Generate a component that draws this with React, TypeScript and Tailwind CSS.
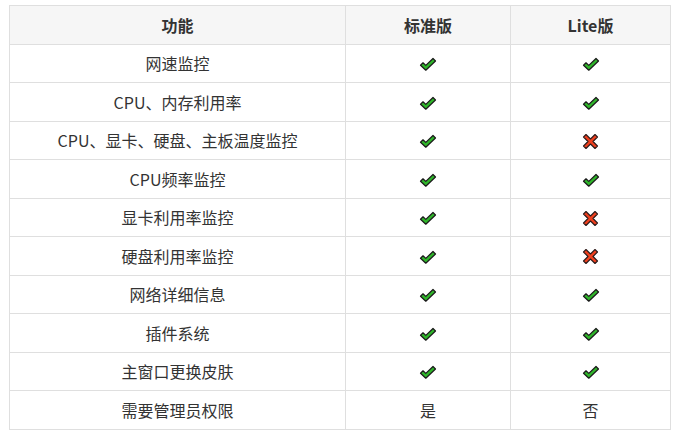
import React from 'react';

type Val = 'yes' | 'no' | string;

const rows: [string, Val, Val][] = [
  ['网速监控', 'yes', 'yes'],
  ['CPU、内存利用率', 'yes', 'yes'],
  ['CPU、显卡、硬盘、主板温度监控', 'yes', 'no'],
  ['CPU频率监控', 'yes', 'yes'],
  ['显卡利用率监控', 'yes', 'no'],
  ['硬盘利用率监控', 'yes', 'no'],
  ['网络详细信息', 'yes', 'yes'],
  ['插件系统', 'yes', 'yes'],
  ['主窗口更换皮肤', 'yes', 'yes'],
  ['需要管理员权限', '是', '否'],
];

const Check = () => (
  <svg width="18" height="15" viewBox="0 0 18 15" className="inline-block">
    <path
      d="M1.5 8.2 L4 5.8 L6.8 8.4 L14 1.5 L16.5 4 L6.8 13.2 Z"
      fill="#2fb52a"
      stroke="#1a1a1a"
      strokeWidth="1.2"
      strokeLinejoin="round"
    />
  </svg>
);

const Cross = () => (
  <svg width="17" height="17" viewBox="0 0 17 17" className="inline-block">
    <path
      d="M1.5 4 L4 1.5 L8.5 6 L13 1.5 L15.5 4 L11 8.5 L15.5 13 L13 15.5 L8.5 11 L4 15.5 L1.5 13 L6 8.5 Z"
      fill="#f0401e"
      stroke="#2a1a1a"
      strokeWidth="1.1"
      strokeLinejoin="round"
    />
  </svg>
);

const Cell = ({ v }: { v: Val }) => {
  if (v === 'yes') return <Check />;
  if (v === 'no') return <Cross />;
  return <>{v}</>;
};

const App = () => {
  return (
    <div className="w-[675px] h-[434px] bg-white pt-[5px] pl-[9px]">
      <table
        className="w-[661px] border-collapse text-[16px] text-[#333] table-fixed"
        style={{ fontFamily: '"Noto Sans CJK SC", "Noto Sans", sans-serif' }}
      >
        <colgroup>
          <col className="w-[336px]" />
          <col className="w-[165px]" />
          <col className="w-[160px]" />
        </colgroup>
        <thead>
          <tr className="h-[38.5px] bg-[#f6f6f6]">
            <th className="border border-[#dfdfdf] font-bold text-center p-0 leading-none">功能</th>
            <th className="border border-[#dfdfdf] font-bold text-center p-0 leading-none">标准版</th>
            <th className="border border-[#dfdfdf] font-bold text-center p-0 leading-none">Lite版</th>
          </tr>
        </thead>
        <tbody>
          {rows.map(([name, std, lite]) => (
            <tr key={name} className="h-[38.5px]">
              <td className="border border-[#dfdfdf] text-center p-0 leading-none">{name}</td>
              <td className="border border-[#dfdfdf] text-center p-0 leading-none">
                <Cell v={std} />
              </td>
              <td className="border border-[#dfdfdf] text-center p-0 leading-none">
                <Cell v={lite} />
              </td>
            </tr>
          ))}
        </tbody>
      </table>
    </div>
  );
};

export default App;
